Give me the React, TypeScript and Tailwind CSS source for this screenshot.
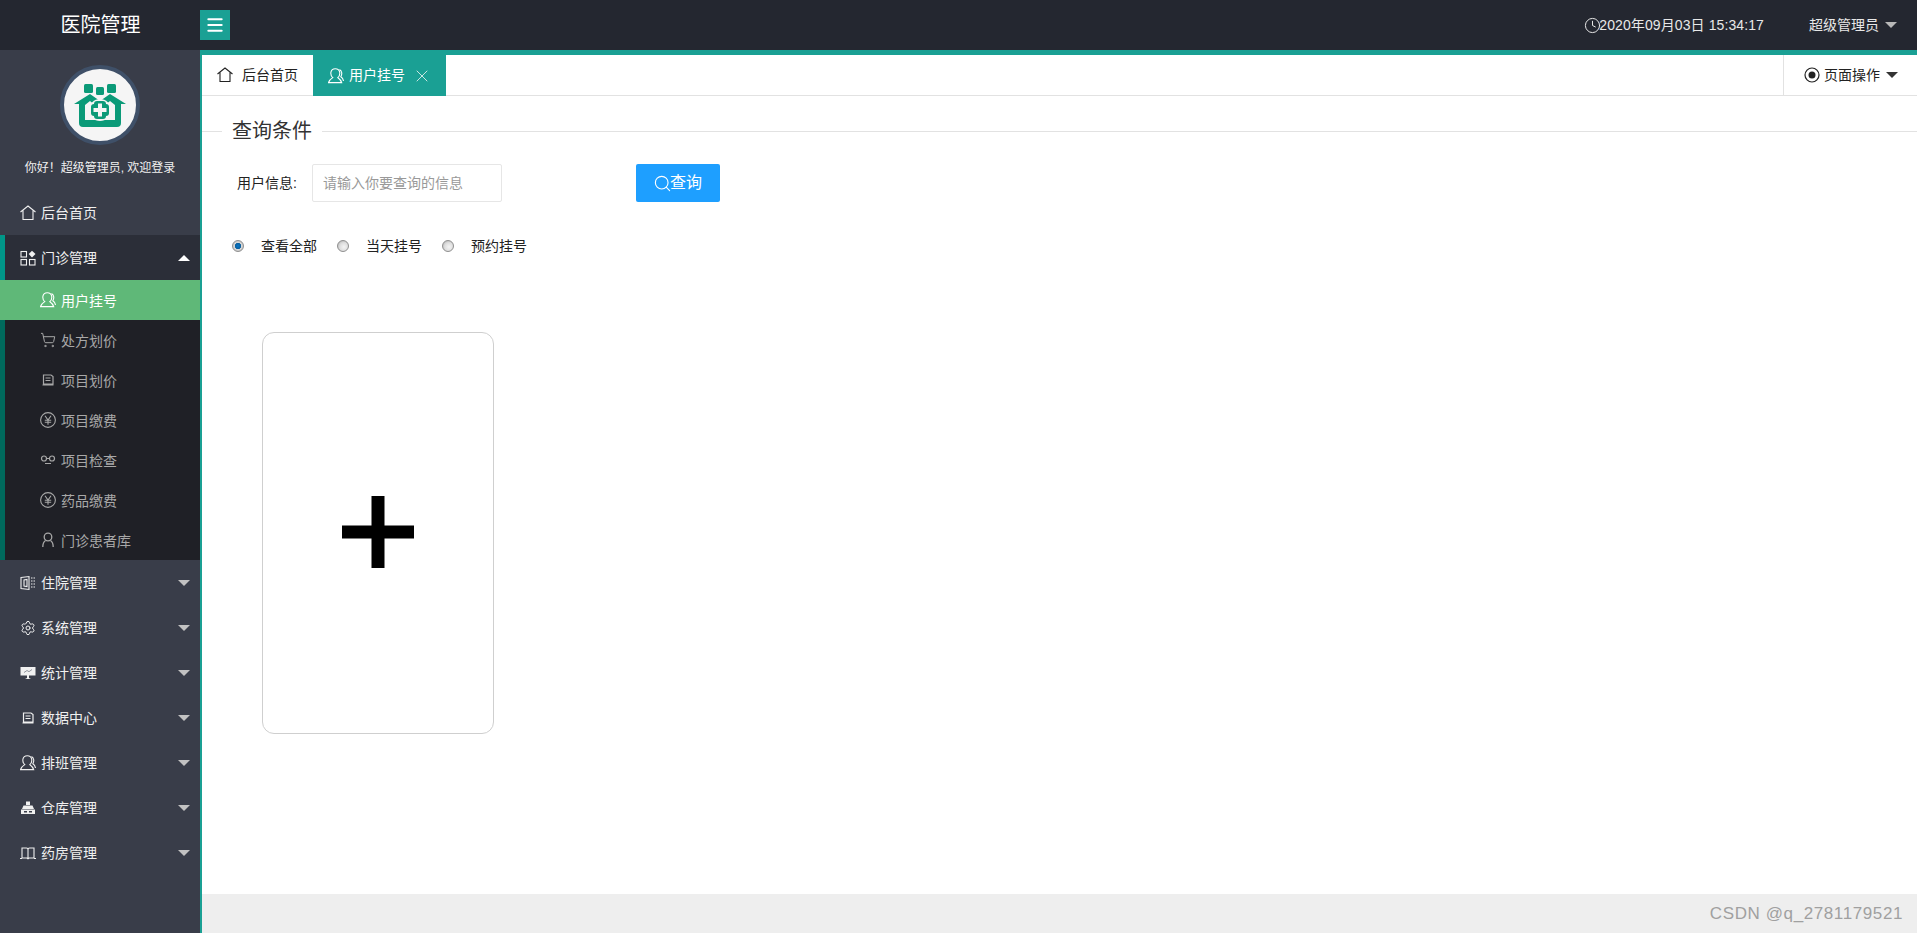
import React from "react";
import { Clock, Menu, Search, Settings, ShoppingCart, X } from "lucide-react";

type IconProps = { className?: string };

const HouseIcon = ({ className }: IconProps) => (
  <svg viewBox="0 0 16 16" fill="none" stroke="currentColor" strokeWidth="1.100" className={className}>
    <path d="M0.500 7 8 1l7.500 6M3 5.500V14.500h10V5.500" />
  </svg>
);

const UserIcon = ({ className }: IconProps) => (
  <svg viewBox="0 0 16 16" fill="none" stroke="currentColor" strokeWidth="1.100" className={className}>
    <path d="M4.800 9.600C1.800 7 2 .7 7.300.7s5.500 6.300 2.500 8.900c1.300.9 3 2 3.900 5H.5c.9-3 3-4.100 4.300-5Z" />
    <path d="M11.500 1.500c2.700 1.400 2.800 5 1.300 7.200 1.300.8 2.400 2.400 2.700 4.300" />
  </svg>
);

const PersonIcon = ({ className }: IconProps) => (
  <svg viewBox="0 0 16 16" fill="none" stroke="currentColor" strokeWidth="1.300" className={className}>
    <circle cx="8" cy="5" r="3.800" />
    <path d="M5.500 8.500C3.500 9.800 2.800 12 2.800 15M10.500 8.500c2 1.300 2.700 3.500 2.700 6.500" />
  </svg>
);

const YenIcon = ({ className }: IconProps) => (
  <svg viewBox="0 0 16 16" fill="none" stroke="currentColor" strokeWidth="1.100" className={className}>
    <circle cx="8" cy="8" r="7.400" />
    <path d="M5 3.800 8 8l3-4.200M8 8v4.800M4.800 8.200h6.400M4.800 10.300h6.400" />
  </svg>
);

const DocIcon = ({ className }: IconProps) => (
  <svg viewBox="0 0 16 16" fill="none" stroke="currentColor" strokeWidth="1.200" className={className}>
    <path d="M3.500 3h7.500l2 1.500V12h-9.500zM2.500 13h11" />
    <path d="M5.500 6h5M5.500 8.500h5" />
  </svg>
);

const LoopIcon = ({ className }: IconProps) => (
  <svg viewBox="0 0 16 16" fill="none" stroke="currentColor" strokeWidth="1.200" className={className}>
    <circle cx="4" cy="6.500" r="2.500" />
    <circle cx="12" cy="6.500" r="2.500" />
    <path d="M6.500 6.500h3M5 11.500h6" />
  </svg>
);

const GridPlusIcon = ({ className }: IconProps) => (
  <svg viewBox="0 0 16 16" fill="none" stroke="currentColor" strokeWidth="1.100" className={className}>
    <rect x="1" y="1.500" width="5.500" height="5.500" />
    <rect x="1" y="9.500" width="5.500" height="5.500" />
    <rect x="9.500" y="9.500" width="5.500" height="5.500" />
    <path d="M12 .8 15.500 4 12 7.500 8.700 4Z" fill="currentColor" stroke="none" />
  </svg>
);

const WardIcon = ({ className }: IconProps) => (
  <svg viewBox="0 0 16 16" fill="none" stroke="currentColor" strokeWidth="1.100" className={className}>
    <path d="M1 2.500 9 1.500v13l-8-1zM4 5v6l3 .5v-7z" />
    <path d="M11 3h1.500M13.500 3H15M11 6h1.500M13.500 6H15M11 9h1.500M13.500 9H15M11 12h1.500M13.500 12H15" />
  </svg>
);

const BoardIcon = ({ className }: IconProps) => (
  <svg viewBox="0 0 16 16" className={className}>
    <path d="M0.500 2h15v8.500h-6.500v2.500l2 1h-6l2-1v-2.500H.5z" fill="currentColor" />
    <path d="M4 7.500 7 5.500l2 1.200 3-2.200" fill="none" stroke="#7a7d88" strokeWidth="0.800" />
  </svg>
);

const StoreIcon = ({ className }: IconProps) => (
  <svg viewBox="0 0 16 16" className={className} fill="currentColor">
    <path d="M6 1.500h4v3.500H6zM3.500 5.500h9L14 9H2zM1 9.500h14V14H1z" />
    <path d="M4 11h3v1.500H4zM9 11h3v1.500H9z" fill="#393d49" />
  </svg>
);

const BookIcon = ({ className }: IconProps) => (
  <svg viewBox="0 0 16 16" fill="none" stroke="currentColor" strokeWidth="1.100" className={className}>
    <path d="M2 13V3h4.500Q8 3 8 4.500 8 3 9.500 3H14v10H9l-1 .8-1-.8zM8 4.500v9M0 13.500h2M14 13.500h2" />
  </svg>
);

const TargetIcon = ({ className }: IconProps) => (
  <svg viewBox="0 0 16 16" className={className}>
    <circle cx="8" cy="8" r="7" fill="none" stroke="currentColor" strokeWidth="1.200" />
    <circle cx="8" cy="8" r="3.500" fill="currentColor" />
  </svg>
);

const HospitalLogo = () => (
  <svg viewBox="0 0 52 44" className="h-[44px] w-[52px]">
    <rect x="10" y="1" width="9" height="9" rx="1.500" fill="#0b9a78" />
    <rect x="22" y="4" width="8" height="8" rx="1.500" fill="#0b9a78" />
    <rect x="33" y="1" width="9" height="9" rx="1.500" fill="#0b9a78" />
    <path d="M0 21 16 11l10 7 10-7 16 10h-5v19q0 4-4 4H9q-4 0-4-4V21z" fill="#0b9a78" />
    <path d="M11 37V22l5-4 6 5v14zM41 37V22l-5-4-6 5v14z" fill="#f5f5f5" />
    <circle cx="26" cy="27" r="11" fill="#f5f5f5" />
    <rect x="17" y="21" width="18" height="12" rx="3" fill="#0b9a78" />
    <rect x="20" y="18" width="12" height="18" rx="3" fill="#0b9a78" />
    <path d="M24 20.500h4v4.500h4.500v4H28v4.500h-4V29h-4.500v-4H24z" fill="#f5f5f5" />
  </svg>
);

const Caret = ({ up, className }: { up?: boolean; className: string }) => (
  <span
    className={`h-0 w-0 border-x-[6px] border-x-transparent ${
      up ? "border-b-[6px] border-b-white" : "border-t-[6px]"
    } ${className}`}
  />
);

const subMenu = [
  { label: "用户挂号", Icon: UserIcon, active: true },
  { label: "处方划价", Icon: ShoppingCart },
  { label: "项目划价", Icon: DocIcon },
  { label: "项目缴费", Icon: YenIcon },
  { label: "项目检查", Icon: LoopIcon },
  { label: "药品缴费", Icon: YenIcon },
  { label: "门诊患者库", Icon: PersonIcon },
];

const bottomMenu = [
  { label: "住院管理", Icon: WardIcon },
  { label: "系统管理", Icon: Settings },
  { label: "统计管理", Icon: BoardIcon },
  { label: "数据中心", Icon: DocIcon },
  { label: "排班管理", Icon: UserIcon },
  { label: "仓库管理", Icon: StoreIcon },
  { label: "药房管理", Icon: BookIcon },
];

const Radio = ({ checked }: { checked?: boolean }) => (
  <span
    className={`h-[12px] w-[12px] shrink-0 rounded-full border border-[#8f8f8f] ${
      checked
        ? "bg-[radial-gradient(circle,#0a78c8_0%,#0a5f9e_40%,#d8d8d8_50%,#b4b4b4_100%)]"
        : "bg-[radial-gradient(circle_at_60%_60%,#f4f4f4_0%,#dedede_50%,#a8a8a8_100%)]"
    }`}
  />
);

export default function App() {
  return (
    <div className="flex h-screen w-full flex-col overflow-hidden bg-white text-[14px] [font-family:'Liberation_Sans','Noto_Sans_CJK_SC',sans-serif]">
      <header className="flex h-[50px] shrink-0 items-center bg-[#242730] text-white">
        <div className="w-[200px] pl-px text-center text-[20px]">医院管理</div>
        <button className="flex h-[30px] w-[30px] items-center justify-center bg-[#1aa094]">
          <Menu className="h-[20px] w-[20px]" strokeWidth={2.4} />
        </button>
        <div className="ml-auto flex items-center tracking-[0.1px] text-[#e8e8e8]">
          <Clock className="-mr-[2px] h-[17px] w-[17px]" strokeWidth={1.4} />
          <span>2020年09月03日 15:34:17</span>
        </div>
        <div className="ml-[44px] mr-[20px] flex items-center gap-[6px] text-[#e8e8e8]">
          <span className="pl-px">超级管理员</span>
          <Caret className="border-t-[#b8b8b8]" />
        </div>
      </header>

      <div className="flex min-h-0 flex-1">
        <aside className="w-[200px] shrink-0 bg-[#393d49] text-[#f0f0f0]">
          <div className="flex h-[140px] flex-col items-center pt-[15px]">
            <div className="flex h-[80px] w-[80px] items-center justify-center rounded-full border-4 border-[#3f5068] bg-[#f5f5f5]">
              <HospitalLogo />
            </div>
            <p className="mt-[14px] text-[12px] leading-[18px]">你好！超级管理员, 欢迎登录</p>
          </div>

          <div className="flex h-[45px] items-center gap-[5px] pl-[20px]">
            <HouseIcon className="h-[16px] w-[16px]" />
            <span className="pt-[2px]">后台首页</span>
          </div>

          <div className="border-l-[5px] border-[#00695c]">
            <div className="-ml-[5px] flex h-[45px] items-center gap-[5px] border-l-[5px] border-[#009688] bg-[#2b2e38] pl-[15px] pr-[10px]">
              <GridPlusIcon className="h-[16px] w-[16px]" />
              <span className="pt-[2px]">门诊管理</span>
              <Caret up className="ml-auto" />
            </div>
            <ul className="bg-[#1f2026] text-[#a8a8a8]">
              {subMenu.map(({ label, Icon, active }) => (
                <li
                  key={label}
                  className={`flex h-[40px] items-center gap-[5px] pl-[35px] ${
                    active ? "-ml-[5px] bg-[#5fb878] pl-[40px] text-white" : ""
                  }`}
                >
                  <Icon className="h-[16px] w-[16px]" strokeWidth={1.5} />
                  <span className="pt-[2px]">{label}</span>
                </li>
              ))}
            </ul>
          </div>

          {bottomMenu.map(({ label, Icon }) => (
            <div key={label} className="flex h-[45px] items-center gap-[5px] pl-[20px] pr-[10px]">
              <Icon className="h-[16px] w-[16px]" strokeWidth={1.5} />
              <span className="pt-[2px]">{label}</span>
              <Caret className="ml-auto border-t-[#c2c2c2]" />
            </div>
          ))}
        </aside>

        <main className="flex min-w-0 flex-1 flex-col border-l-2 border-t-[5px] border-[#1aa094]">
          <div className="flex h-[41px] shrink-0 border-b border-[#e2e2e2]">
            <div className="flex w-[111px] items-center gap-[9px] pl-[15px] text-[#222]">
              <HouseIcon className="h-[16px] w-[16px]" />
              后台首页
            </div>
            <div className="-mb-px flex w-[133px] items-center gap-[5px] bg-[#1aa094] pl-[15px] text-white">
              <UserIcon className="h-[16px] w-[16px]" />
              用户挂号
              <X className="ml-[2px] h-[20px] w-[20px] text-[#c9e6e2]" strokeWidth={1.2} />
            </div>
            <div className="ml-auto flex w-[134px] items-center gap-[4px] border-l border-[#e2e2e2] pl-[20px] text-[#222]">
              <TargetIcon className="h-[16px] w-[16px]" />
              页面操作
              <Caret className="ml-[2px] border-t-[#333]" />
            </div>
          </div>

          <div className="flex-1">
            <div className="mt-[20px] flex h-[30px] items-center">
              <div className="h-px w-[20px] bg-[#e2e2e2]" />
              <span className="px-[10px] text-[20px] text-[#333]">查询条件</span>
              <div className="h-px flex-1 bg-[#e2e2e2]" />
            </div>

            <div className="mt-[18px] flex items-center">
              <label className="ml-[35px] text-[#222]">用户信息:</label>
              <input
                readOnly
                placeholder="请输入你要查询的信息"
                className="ml-[15px] h-[38px] w-[190px] rounded-[2px] border border-[#e6e6e6] pl-[10px] outline-none placeholder:text-[#999]"
              />
              <button className="ml-[134px] flex h-[38px] w-[84px] items-center justify-center rounded-[2px] bg-[#1e9fff] pr-px text-[16px] text-white">
                <Search className="-mr-[2px] h-[19px] w-[19px]" strokeWidth={1.4} />
                查询
              </button>
            </div>

            <div className="ml-[30px] mt-[37px] flex h-[14px] items-center text-[#222]">
              <Radio checked />
              <span className="ml-[17px] mr-[20px]">查看全部</span>
              <Radio />
              <span className="ml-[17px] mr-[20px]">当天挂号</span>
              <Radio />
              <span className="ml-[17px]">预约挂号</span>
            </div>

            <div className="ml-[60px] mt-[79px] flex h-[402px] w-[232px] items-center justify-center rounded-[12px] border border-[#cfcfcf]">
              <svg viewBox="0 0 72 72" className="-mt-[2px] h-[72px] w-[72px]" fill="#000">
                <path d="M29.500 0h13v29.500H72v13H42.500V72h-13V42.500H0v-13h29.500z" />
              </svg>
            </div>
          </div>

          <footer className="flex h-[39px] shrink-0 items-center justify-end bg-[#eeeeee] pr-[14px] text-[17px] tracking-[0.6px] text-[#a0a0a0]">
            CSDN @q_2781179521
          </footer>
        </main>
      </div>
    </div>
  );
}
